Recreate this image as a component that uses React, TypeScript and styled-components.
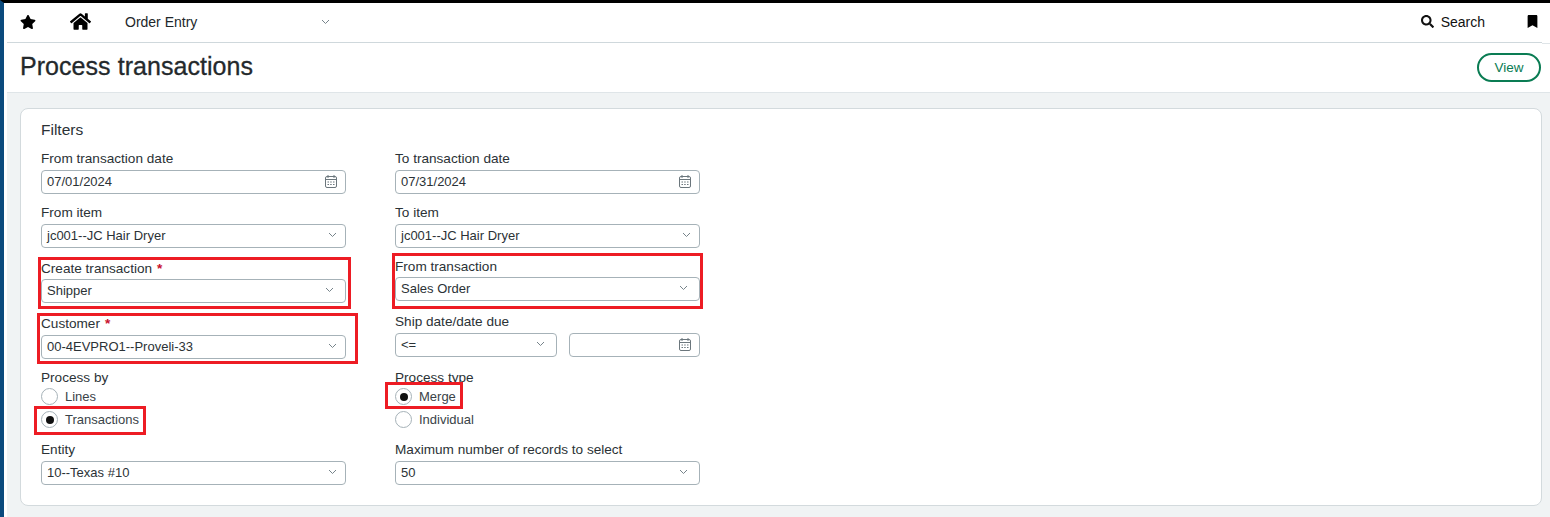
import React from "react";
import styled, { createGlobalStyle } from "styled-components";
import { FaStar, FaHome, FaSearch, FaBookmark } from "react-icons/fa";

const Global = createGlobalStyle`
  html, body { margin: 0; padding: 0; height: 517px; overflow: hidden; background: #fff; }
  * { box-sizing: border-box; }
  body { font-family: "Liberation Sans", Arial, sans-serif; color: #2b3236; }
`;

const Page = styled.div`
  width: 1550px;
  height: 517px;
  border-top: 3px solid #000;
  border-left: 4px solid #0b4a7d;
  padding-left: 3px;
  background: #fff;
  display: flex;
  flex-direction: column;
  overflow: hidden;
`;
const Nav = styled.header`
  position: relative;
  height: 40px;
  flex: none;
  margin-right: 8px;
  background: #fff;
  border-bottom: 1px solid #cfd8dc;
  display: flex;
  align-items: center;
  padding: 0 0 2px 13px;
  color: #000;
  &::after {
    content: "";
    position: absolute;
    right: -8px;
    top: calc(100% + 1px);
    width: 8px;
    height: 1px;
    background: #dfe5e8;
  }
`;
const StarSlot = styled.span`
  width: 50px;
  display: flex;
  font-size: 16px;
`;
const HomeSlot = styled.span`
  width: 55px;
  display: flex;
  font-size: 21px;
  margin-top: -1px;
`;
const ModuleSelect = styled.div`
  width: 205px;
  display: flex;
  align-items: center;
  justify-content: space-between;
  font-size: 14px;
  color: #22272a;
`;
const Spacer = styled.div`
  flex: 1;
`;
const SearchBox = styled.div`
  display: flex;
  align-items: center;
  gap: 7px;
  font-size: 14px;
  margin-right: 41px;
  color: #111;
`;
const BookmarkSlot = styled.span`
  display: flex;
  font-size: 13px;
  margin-right: 3px;
`;
const TitleBar = styled.div`
  height: 50px;
  flex: none;
  background: #fff;
  border-bottom: 1px solid #dfe5e8;
  display: flex;
  align-items: center;
  justify-content: space-between;
  padding: 0 9px 2px 13px;
`;
const Title = styled.h1`
  margin: 0;
  font-size: 25px;
  font-weight: 400;
  letter-spacing: 0.05px;
  color: #24292c;
  -webkit-text-stroke: 0.3px #24292c;
`;
const ViewButton = styled.button`
  width: 64px;
  height: 29px;
  margin-top: 2px;
  border: 2px solid #0a7c53;
  border-radius: 15px;
  background: #fff;
  color: #0a7c53;
  font: 13.5px "Liberation Sans", Arial, sans-serif;
  padding: 0;
`;
const Content = styled.main`
  flex: 1;
  background: #f0f3f4;
  padding: 15px 8px 0 13px;
`;
const Card = styled.section`
  position: relative;
  height: 398px;
  background: #fff;
  border: 1px solid #d3dadd;
  border-radius: 8px;
  padding: 13px 20px 0;
`;
const CardTitle = styled.h2`
  margin: 0;
  font-size: 15.5px;
  font-weight: 400;
  line-height: 16px;
  color: #2b3236;
`;
const Columns = styled.div`
  display: flex;
  gap: 49px;
  margin-top: 12px;
`;
const Column = styled.div`
  width: 305px;
  display: flex;
  flex-direction: column;
`;
const Field = styled.div<{ $top?: number }>`
  position: relative;
  margin-top: ${(p) => p.$top ?? 10}px;
`;
const Label = styled.label<{ $gap?: number }>`
  display: block;
  font-size: 13.6px;
  line-height: 16px;
  padding-top: 1px;
  color: #2b3236;
  margin-bottom: ${(p) => p.$gap ?? 3}px;
`;
const Required = styled.span`
  color: #c8102e;
  font-weight: 700;
  margin-left: 5px;
`;
const Control = styled.div<{ $width?: number; $inset?: boolean }>`
  width: ${(p) => p.$width ?? 305}px;
  height: 24px;
  background: #fff;
  border: 1px solid #a6b2b8;
  border-radius: 4px;
  display: flex;
  align-items: center;
  justify-content: space-between;
  padding: 0 ${(p) => (p.$inset ? 11 : 8)}px 2px 5px;
  font-size: 13px;
  color: #2b3236;
`;
const Pair = styled.div`
  display: flex;
  justify-content: space-between;
`;
const RadioRow = styled.div`
  height: 23px;
  display: flex;
  align-items: center;
  gap: 7px;
  font-size: 13px;
  color: #3a4348;
`;
const RadioMark = styled.span<{ $on?: boolean }>`
  width: 17px;
  height: 17px;
  border-radius: 50%;
  border: 1px solid #a6b2b8;
  background: #fff;
  display: flex;
  align-items: center;
  justify-content: center;
  &::after {
    content: "";
    width: 8px;
    height: 8px;
    border-radius: 50%;
    background: ${(p) => (p.$on ? "#111" : "transparent")};
  }
`;
const Highlight = styled.div<{ $l: number; $t: number; $r: number; $b: number }>`
  position: absolute;
  left: ${(p) => p.$l}px;
  top: ${(p) => p.$t}px;
  right: ${(p) => p.$r}px;
  bottom: ${(p) => p.$b}px;
  border: 3px solid #ed1c24;
  pointer-events: none;
`;

const Chevron = () => (
  <svg width="9" height="6" viewBox="0 0 9 6" fill="none" stroke="#76838a" strokeWidth="1">
    <path d="M1 1l3.5 3.5L8 1" />
  </svg>
);
const Calendar = () => (
  <svg width="12" height="13" viewBox="0 0 12 13" fill="none" stroke="#6b767c" strokeWidth="1">
    <rect x="0.5" y="1.5" width="11" height="11" rx="1.5" />
    <path d="M3 0v3M9 0v3M0.5 4.5h11" />
    <path d="M2.5 7h1.5M5.2 7h1.5M8 7h1.5M2.5 9.5h1.5M5.2 9.5h1.5M8 9.5h1.5" strokeWidth="1.2" />
  </svg>
);
const Select = ({ value, width, inset }: { value: string; width?: number; inset?: boolean }) => (
  <Control $width={width} $inset={inset}>
    <span>{value}</span>
    <Chevron />
  </Control>
);
const DateInput = ({ value, width }: { value?: string; width?: number }) => (
  <Control $width={width}>
    <span>{value}</span>
    <Calendar />
  </Control>
);
const Radio = ({ label, on }: { label: string; on?: boolean }) => (
  <RadioRow>
    <RadioMark $on={on} />
    {label}
  </RadioRow>
);

export default function App() {
  return (
    <Page>
      <Global />
      <Nav>
        <StarSlot><FaStar /></StarSlot>
        <HomeSlot><FaHome /></HomeSlot>
        <ModuleSelect>
          Order Entry
          <Chevron />
        </ModuleSelect>
        <Spacer />
        <SearchBox><FaSearch size={13} />Search</SearchBox>
        <BookmarkSlot><FaBookmark /></BookmarkSlot>
      </Nav>
      <TitleBar>
        <Title>Process transactions</Title>
        <ViewButton>View</ViewButton>
      </TitleBar>
      <Content>
        <Card>
          <CardTitle>Filters</CardTitle>
          <Columns>
            <Column>
              <Field $top={0}>
                <Label>From transaction date</Label>
                <DateInput value="07/01/2024" />
              </Field>
              <Field>
                <Label>From item</Label>
                <Select value="jc001--JC Hair Dryer" />
              </Field>
              <Field $top={12}>
                <Label $gap={2}>Create transaction<Required>*</Required></Label>
                <Select value="Shipper" inset />
              </Field>
              <Field $top={12}>
                <Label>Customer<Required>*</Required></Label>
                <Select value="00-4EVPRO1--Proveli-33" />
              </Field>
              <Field>
                <Label $gap={-1}>Process by</Label>
                <Radio label="Lines" />
                <Radio label="Transactions" on />
              </Field>
              <Field>
                <Label>Entity</Label>
                <Select value="10--Texas #10" />
              </Field>
            </Column>
            <Column>
              <Field $top={0}>
                <Label>To transaction date</Label>
                <DateInput value="07/31/2024" />
              </Field>
              <Field>
                <Label>To item</Label>
                <Select value="jc001--JC Hair Dryer" />
              </Field>
              <Field>
                <Label $gap={2}>From transaction</Label>
                <Select value="Sales Order" inset />
              </Field>
              <Field $top={12}>
                <Label>Ship date/date due</Label>
                <Pair>
                  <Select value="<=" width={162} inset />
                  <DateInput width={131} />
                </Pair>
              </Field>
              <Field $top={12}>
                <Label $gap={-1}>Process type</Label>
                <Radio label="Merge" on />
                <Radio label="Individual" />
              </Field>
              <Field>
                <Label>Maximum number of records to select</Label>
                <Select value="50" inset />
              </Field>
            </Column>
          </Columns>
          <Highlight $l={17} $t={148} $r={1190} $b={196} />
          <Highlight $l={16} $t={204} $r={1183} $b={141} />
          <Highlight $l={371} $t={144} $r={838} $b={196} />
          <Highlight $l={13} $t={297} $r={1395} $b={70} />
          <Highlight $l={364} $t={273} $r={1078} $b={96} />
        </Card>
      </Content>
    </Page>
  );
}
